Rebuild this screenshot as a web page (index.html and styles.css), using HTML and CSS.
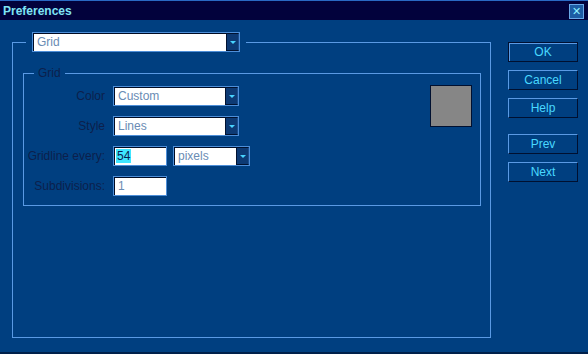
FILE: index.html
```html
<!DOCTYPE html>
<html lang="en">
<head>
    <meta charset="UTF-8">
    <title>Preferences</title>
    <link rel="stylesheet" href="styles.css">
</head>
<body>
    <div class="window">
        <div class="titlebar">
            <span class="title">Preferences</span>
            <span class="close">&#x2715;</span>
        </div>

        <div class="main">
            <fieldset class="panel">
                <legend class="panel-legend">
                    <div class="dropdown wide">
                        <span class="value">Grid</span>
                        <span class="arrow"></span>
                    </div>
                </legend>

                <fieldset class="group">
                    <legend class="group-legend">Grid</legend>
                    <div class="group-body">
                        <div class="form">
                            <label class="label">Color</label>
                            <div class="row">
                                <div class="dropdown medium">
                                    <span class="value">Custom</span>
                                    <span class="arrow"></span>
                                </div>
                            </div>

                            <label class="label">Style</label>
                            <div class="row">
                                <div class="dropdown medium">
                                    <span class="value">Lines</span>
                                    <span class="arrow"></span>
                                </div>
                            </div>

                            <label class="label">Gridline every:</label>
                            <div class="row">
                                <div class="field"><span class="text"><span class="selected">54</span></span></div>
                                <div class="dropdown small">
                                    <span class="value">pixels</span>
                                    <span class="arrow"></span>
                                </div>
                            </div>

                            <label class="label">Subdivisions:</label>
                            <div class="row">
                                <div class="field"><span class="text">1</span></div>
                            </div>
                        </div>
                        <div class="swatch"></div>
                    </div>
                </fieldset>
            </fieldset>

            <div class="buttons">
                <button class="btn default">OK</button>
                <button class="btn">Cancel</button>
                <button class="btn">Help</button>
                <button class="btn spaced">Prev</button>
                <button class="btn">Next</button>
            </div>
        </div>
    </div>
</body>
</html>
```

FILE: styles.css
```css
html, body {
    margin: 0;
    padding: 0;
}
body {
    width: 588px;
    height: 354px;
    background-color: #003f80;
    font-family: "Liberation Sans", Arial, sans-serif;
    font-size: 12px;
    overflow: hidden;
}
.window {
    height: 352px;
    border-bottom: 2px solid #00204a;
}
.titlebar {
    height: 19px;
    border-top: 1px solid #2a6ac4;
    background-color: #02023c;
    display: flex;
    align-items: center;
    justify-content: space-between;
    padding: 0 4px 0 3px;
}
.title {
    color: #7fe4f4;
    font-weight: bold;
    font-size: 12px;
}
.close {
    width: 13px;
    height: 13px;
    margin-top: 2px;
    border: 1px solid #6aa8e8;
    background-color: #1d5ca4;
    color: #8ff0ff;
    font-size: 11px;
    line-height: 13px;
    text-align: center;
}
.main {
    display: flex;
    padding: 12px 0 0 12px;
}

/* outer panel with the page selector on its border */
.panel {
    margin: 0;
    width: 457px;
    height: 304px;
    padding: 0 10px;
    border: 1px solid #5a9ae4;
}
.panel-legend {
    margin-left: 3px;
    padding: 0 6px;
}
.group {
    margin: 14px -1px 0 0;
    padding: 0 8px 9px 0;
    border: 1px solid #5a9ae4;
}
.group-legend {
    margin-left: 10px;
    padding: 0 4px;
    color: #0c1f4c;
    line-height: 14px;
}
.group-body {
    display: flex;
    justify-content: space-between;
    padding-top: 6px;
}
.form {
    display: grid;
    grid-template-columns: 81px auto;
    column-gap: 8px;
    row-gap: 10px;
    align-items: center;
}
.label {
    text-align: right;
    color: #0c1f4c;
}
.row {
    display: flex;
    gap: 6px;
}

/* combo boxes and text fields */
.dropdown, .field {
    height: 18px;
    display: flex;
    border: 1px solid #4d8ed8;
}
.dropdown.wide { width: 206px; }
.dropdown.medium { width: 124px; }
.dropdown.small { width: 75px; }
.field { width: 52px; }
.value, .text {
    flex: 1;
    color: #6a8cb4;
    background-color: #fff;
    border-top: 1px solid #000c24;
    border-left: 1px solid #000c24;
    line-height: 17px;
    padding-left: 3px;
}
.selected {
    background-color: #3ee6ff;
    color: #0a2050;
    padding: 0 1px;
    margin-left: -2px;
}
.arrow {
    width: 11px;
    background-color: #0d3a74;
    border-left: 1px solid #001230;
    border-top: 1px solid #001230;
    border-right: 1px solid #1c4f90;
    border-bottom: 1px solid #001230;
    position: relative;
}
.arrow::after {
    content: "";
    position: absolute;
    left: 3px;
    top: 7px;
    border-left: 3px solid transparent;
    border-right: 3px solid transparent;
    border-top: 3px solid #48d4ff;
}
.swatch {
    width: 40px;
    height: 40px;
    margin-top: -1px;
    background-color: #868686;
    border: 1px solid #001030;
}

/* dialog buttons */
.buttons {
    display: flex;
    flex-direction: column;
    gap: 8px;
    margin-left: 17px;
    margin-top: 10px;
}
.btn {
    width: 70px;
    height: 20px;
    padding: 0;
    font-family: inherit;
    font-size: 12px;
    color: #48d8ff;
    background-color: #003f80;
    border: 1px solid;
    border-color: #5a9ae4 #001030 #001030 #5a9ae4;
}
.btn.default {
    border-color: #001030;
    box-shadow: inset 1px 1px 0 #5a9ae4;
}
.btn.spaced {
    margin-top: 8px;
}
```
